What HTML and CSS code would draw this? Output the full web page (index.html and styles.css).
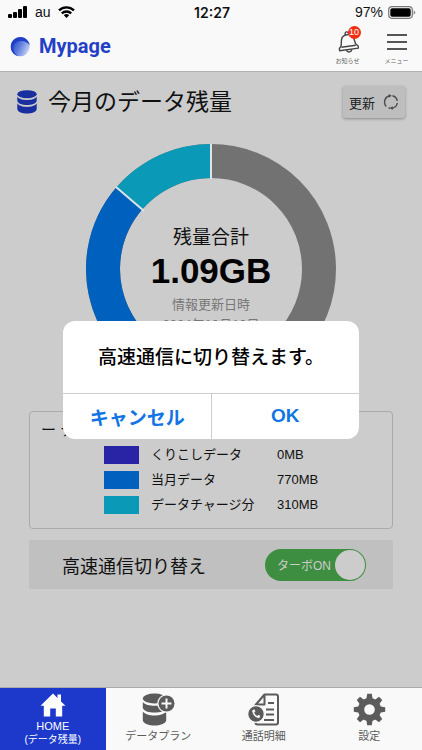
FILE: index.html
```html
<!DOCTYPE html>
<html lang="ja">
<head>
<meta charset="utf-8">
<meta name="viewport" content="width=device-width, initial-scale=1">
<title>Mypage</title>
<link rel="stylesheet" href="styles.css">
</head>
<body>
<header class="top">
  <div class="status">
    <div class="status-left">
      <svg width="20" height="13" viewBox="0 0 20 13" aria-hidden="true"><rect x="0" y="8" width="4" height="4" rx="1"/><rect x="5" y="6" width="4" height="6" rx="1"/><rect x="10" y="3" width="4" height="9" rx="1"/><rect x="15" y="0" width="4" height="12" rx="1"/></svg>
      <span>au</span>
      <svg width="17" height="12" viewBox="0 0 17 12" aria-hidden="true"><g fill="none" stroke="#000" stroke-width="2.3"><path d="M1 4.4a10.8 10.8 0 0 1 15 0"/><path d="M3.8 7.4a6.8 6.8 0 0 1 9.4 0"/></g><path d="M8.500 12l-2.700-2.700a3.900 3.900 0 0 1 5.400 0z"/></svg>
    </div>
    <strong class="clock">12:27</strong>
    <div class="status-right">
      <span>97%</span>
      <svg width="28" height="13" viewBox="0 0 28 13" aria-hidden="true"><rect x=".7" y=".7" width="23.600" height="11.600" rx="3.200" fill="none" stroke="#777" stroke-width="1.200"/><rect x="2.300" y="2.300" width="20.400" height="8.400" rx="1.800"/><path d="M25.700 4.200v4.600q1.600-.8 1.600-2.300t-1.600-2.300z" fill="#888"/></svg>
    </div>
  </div>
  <div class="brandbar">
    <a class="brand" href="#">
      <svg width="21" height="21" viewBox="0 0 21 21" aria-hidden="true"><defs><linearGradient id="globe" x1="0" y1=".3" x2="1" y2=".8"><stop offset="0" stop-color="#2445cc"/><stop offset=".45" stop-color="#5f7ddd"/><stop offset=".8" stop-color="#a9bbee"/><stop offset="1" stop-color="#e9eefb"/></linearGradient></defs><circle cx="10.300" cy="10.700" r="9.500" fill="url(#globe)"/><path d="M20 9.200C18.500 4 15 .9 10.500.9 5 .9.800 5.200.800 10.700c0 4.500 3 8.200 7 9.300C4.500 17.500 3 14.500 3.300 11.500 3.700 7 8 4.500 12.500 5c3 .4 5.500 2 7.500 4.200z" fill="#2040c8"/></svg>
      <span>Mypage</span>
    </a>
    <nav class="tools">
      <a href="#" class="tool">
        <span class="tool-icon"><svg width="22" height="22" viewBox="0 0 22 22" fill="none" stroke="#444" stroke-width="1.400" stroke-linejoin="round" aria-hidden="true"><g transform="rotate(-8 11 11)"><path d="M9.300 3.700V2.500a1.700 1.700 0 0 1 3.400 0v1.200"/><path d="M1.500 18.500v-2.200l2.200-2.500 1-5.300C5.300 5.500 8 3.700 11 3.700s5.700 1.800 6.300 4.800l1 5.300 2.200 2.500v2.200z"/><path d="M3.700 15.300h14.600M8.500 18.700c0 1.500 1 2.300 2.500 2.300s2.500-.8 2.500-2.300"/></g></svg><span class="badge">10</span></span>
        <span>お知らせ</span>
      </a>
      <a href="#" class="tool">
        <span class="tool-icon"><svg width="22" height="18" viewBox="0 0 22 18" fill="none" stroke="#555" stroke-width="2" aria-hidden="true"><path d="M1 2h20M1 9h20M1 16h20"/></svg></span>
        <span>メニュー</span>
      </a>
    </nav>
  </div>
</header>

<main class="screen">
  <div class="heading">
    <svg width="20" height="24" viewBox="0 0 20 24" fill="#192f9f" aria-hidden="true"><ellipse cx="10" cy="4.200" rx="9.700" ry="4"/><path d="M.3 6.500C2 9.300 6 10 10 10s8-.7 9.700-3.500v4.300C19 13.800 14.500 15 10 15S1 13.800.3 10.800zM.3 13.300C2 16 6 16.900 10 16.900s8-.9 9.700-3.600v6c-.7 3-5.200 4.300-9.700 4.300S1 22.300.3 19.300z"/></svg>
    <h1>今月のデータ残量</h1>
    <button class="refresh" type="button">更新
      <svg width="16" height="16" viewBox="0 0 16 16" fill="none" stroke="#4a4a4a" stroke-width="1.400" aria-hidden="true"><path d="M3.300 12.400A6.400 6.400 0 0 1 6.500 1.800M9.500 1.800A6.400 6.400 0 0 1 14.300 7M14.300 9A6.400 6.400 0 0 1 9 14.200M5.500 13.900 7 14.300"/><path d="M5.800 0v3.800L8.800 1.800zM9.700 12.200V16l-3-1.900z" fill="#4a4a4a" stroke="none"/></svg>
    </button>
  </div>

  <div class="gauge">
    <svg class="ring" viewBox="0 0 250 250" fill="none" stroke-width="34" aria-hidden="true">
      <circle cx="125" cy="125" r="108" stroke="#727272"/>
      <circle cx="125" cy="125" r="108" stroke="#0060bd" pathLength="360" stroke-dasharray="122 238" transform="rotate(99 125 125)"/>
      <circle cx="125" cy="125" r="108" stroke="#0a9ab7" pathLength="360" stroke-dasharray="49 311" transform="rotate(221 125 125)"/>
      <path d="M125 0v35M30 43l28 24" stroke="#dde3e6" stroke-width="2"/>
    </svg>
    <div class="gauge-text">
      <span class="total-label">残量合計</span>
      <strong class="total">1.09GB</strong>
      <span class="updated">情報更新日時</span>
      <span class="updated">2024年10月13日</span>
    </div>
  </div>

  <section class="details">
    <h2>ー デ</h2>
    <table>
      <tr><td><span class="swatch carry"></span></td><th scope="row">くりこしデータ</th><td>0MB</td></tr>
      <tr><td><span class="swatch month"></span></td><th scope="row">当月データ</th><td>770MB</td></tr>
      <tr><td><span class="swatch charge"></span></td><th scope="row">データチャージ分</th><td>310MB</td></tr>
    </table>
  </section>

  <label class="turbo">
    <span class="turbo-label">高速通信切り替え</span>
    <span class="switch"><input type="checkbox" role="switch" checked><span class="switch-text">ターボON</span></span>
  </label>

  <div class="overlay">
    <div class="dialog" role="alertdialog" aria-modal="true" aria-labelledby="message">
      <p id="message">高速通信に切り替えます。</p>
      <div class="actions"><button type="button">キャンセル</button><button type="button">OK</button></div>
    </div>
  </div>
</main>

<nav class="tabs">
  <a href="#" class="tab active">
    <svg width="26" height="24" viewBox="0 0 26 24" fill="#fff" aria-hidden="true"><path d="M13 .5 17.500 5V1.500h3.500v7l4.500 4.300h-3.300v10.700h-6.400v-8h-5.600v8H3.800V12.800H.5z"/></svg>
    <span>HOME</span><small>(データ残量)</small>
  </a>
  <a href="#" class="tab">
    <svg width="33" height="33" viewBox="0 0 33 33" fill="#5b5b5b" aria-hidden="true"><ellipse cx="12.500" cy="5.500" rx="11.700" ry="5"/><path d="M.8 9c2.300 3 7 3.700 11.700 3.700S22 12 24.200 9v6c-1 3-6 4.600-11.700 4.600S1.800 18 .8 15z"/><path d="M.8 18.500C3 21.300 7.500 22.500 12.500 22.500s9.500-1.200 11.700-4v9c-1 3.200-6 5-11.700 5S1.800 30.700.8 27.500z"/><circle cx="24.500" cy="10.500" r="9.300" fill="#f9f9f9"/><circle cx="24.500" cy="10.500" r="8"/><path d="M24.500 5.500v10M19.500 10.500h10" stroke="#f9f9f9" stroke-width="2"/></svg>
    <span>データプラン</span>
  </a>
  <a href="#" class="tab">
    <svg width="33" height="33" viewBox="0 0 33 33" fill="none" stroke="#5b5b5b" stroke-width="2" stroke-linejoin="round" aria-hidden="true"><path d="M8.500 12 17.500 1.500H29q2 0 2 2v26q0 2-2 2H10.500q-2 0-2-2zM8.500 11.500h9v-10M21 10h6M19 16.500h8M19 21.500h8M17 27h10"/><circle cx="9" cy="21" r="8.300" fill="#5b5b5b" stroke="#f9f9f9" stroke-width="1.200"/><path d="M6.500 17.500c-.8 3 2 6.500 5 6.500" stroke="#f9f9f9" stroke-width="1.600"/><path d="m6.200 17 1.200 2M10.600 23l2.100 1" stroke="#f9f9f9" stroke-width="2.600"/></svg>
    <span>通話明細</span>
  </a>
  <a href="#" class="tab">
    <svg width="33" height="33" viewBox="-16.500 -16.500 33 33" fill="#5b5b5b" aria-hidden="true"><path d="M-3.200-10-2.300-15.700h4.600L3.200-10v20l-.9 5.700h-4.600L-3.200 10z"/><path d="M-3.200-10-2.300-15.700h4.600L3.200-10v20l-.9 5.700h-4.600L-3.200 10z" transform="rotate(45)"/><path d="M-3.200-10-2.300-15.700h4.600L3.200-10v20l-.9 5.700h-4.600L-3.200 10z" transform="rotate(90)"/><path d="M-3.200-10-2.300-15.700h4.600L3.200-10v20l-.9 5.700h-4.600L-3.200 10z" transform="rotate(135)"/><circle r="11.500"/><circle r="5.300" fill="#f9f9f9"/></svg>
    <span>設定</span>
  </a>
</nav>
</body>
</html>
```
FILE: styles.css
```css
* { box-sizing: border-box; }
body {
  margin: 0;
  min-height: 100vh;
  display: flex;
  flex-direction: column;
  background: #ccc;
  color: #111;
  font-family: "Liberation Sans", "Noto Sans CJK JP", sans-serif;
}
a { color: inherit; text-decoration: none; }
button { font: inherit; border: 0; cursor: pointer; }
svg { display: block; flex: none; }

.top { background: #f9f9f9; border-bottom: 1px solid #b0b0b0; }
.status {
  display: grid;
  grid-template-columns: 1fr auto 1fr;
  align-items: center;
  height: 24px;
  padding: 0 6px 0 8px;
  font-size: 14px;
}
.status-left, .status-right { display: flex; align-items: center; gap: 7px; }
.status-right { justify-content: flex-end; gap: 5px; }
.clock { font: 600 14px Inter, sans-serif; }
.brandbar {
  display: flex;
  justify-content: space-between;
  height: 47px;
  padding: 0 1px 0 10px;
}
.brand {
  display: flex;
  align-items: center;
  gap: 8px;
  padding-bottom: 3px;
  color: #2340c6;
  font: 700 20px Roboto, sans-serif;
}
.tools { display: flex; }
.tool {
  display: flex;
  flex-direction: column;
  align-items: center;
  width: 49px;
  padding-top: 6px;
  color: #666;
  font-size: 6px;
  line-height: 10px;
  white-space: nowrap;
}
.tool-icon { position: relative; display: grid; place-items: center; height: 24px; margin-bottom: 2px; }
.badge {
  position: absolute;
  top: -4px;
  right: -2px;
  width: 13px;
  height: 13px;
  border-radius: 50%;
  background: #f22d11;
  color: #fff;
  font-size: 9px;
  line-height: 13px;
  text-align: center;
}

.screen { position: relative; flex: 1; padding: 14px 29px 16px; }
.heading { display: flex; align-items: center; margin: 0 -12px; height: 32px; }
.heading h1 { flex: 1; margin: 0 0 0 11px; font-size: 23px; line-height: 32px; font-weight: 400; }
.refresh {
  display: flex;
  align-items: center;
  gap: 8px;
  height: 32px;
  padding: 0 6px;
  border-radius: 3px;
  background: #bebebe;
  box-shadow: 0 1px 3px #888;
  color: #222;
  font-size: 13px;
}
.gauge { display: grid; width: 250px; margin: 26px auto 17px; }
.ring { width: 100%; grid-area: 1 / 1; }
.gauge-text {
  grid-area: 1 / 1;
  display: flex;
  flex-direction: column;
  align-items: center;
  padding-top: 80px;
}
.total-label { font-size: 19px; line-height: 28px; }
.total { font-size: 35px; line-height: 38px; color: #000; }
.updated { font-size: 13px; line-height: 20px; color: #777; }
.total + .updated { margin-top: 5px; }

.details { height: 118px; padding: 8px 11px; border: 1px solid #aaa; border-radius: 4px; }
.details h2 { margin: 0 0 2px; font-size: 15px; line-height: 20px; font-weight: 400; }
.details table { margin-left: 63px; border-collapse: collapse; font-size: 13px; }
.details tr { height: 25px; }
.details td, .details th { padding: 0; line-height: 20px; font-weight: 400; text-align: left; }
.details td:first-child { width: 47px; }
.details th { width: 126px; }
.swatch { display: block; width: 35px; height: 18px; }
.carry { background: #2824a5; }
.month { background: #0060bd; }
.charge { background: #0a9ab7; }

.turbo {
  display: flex;
  align-items: center;
  justify-content: space-between;
  height: 49px;
  margin-top: 11px;
  padding: 0 27px 0 33px;
  border-radius: 2px;
  background: #c0c0c0;
}
.turbo-label { font-size: 18px; }
.switch { display: grid; align-items: center; width: 101px; height: 32px; }
.switch input {
  grid-area: 1 / 1;
  appearance: none;
  display: flex;
  justify-content: flex-end;
  width: 101px;
  height: 32px;
  margin: 0;
  padding: 1px;
  border-radius: 16px;
  background: #3e8e41;
}
.switch input::before { content: ""; width: 30px; height: 30px; border-radius: 50%; background: #ccc; }
.switch input:not(:checked) { justify-content: flex-start; }
.switch-text { grid-area: 1 / 1; padding-left: 12px; color: #ccc; font-size: 12px; z-index: 1; }

.overlay { position: absolute; inset: 0; display: grid; place-items: center; }
.dialog { width: 70%; border-radius: 12px; background: #fff; overflow: hidden; }
.dialog p { margin: 0; padding: 23px 10px 21px; font-size: 18px; line-height: 28px; font-weight: 500; text-align: center; color: #000; }
.actions { display: grid; grid-template-columns: 1fr 1fr; border-top: 1px solid #ccc; }
.actions button { height: 45px; background: none; color: #1274e5; font-size: 18px; font-weight: 700; }
.dialog p, .actions button { font-size: 19px; }
.actions button + button { border-left: 1px solid #ccc; }

.tabs { display: grid; grid-template-columns: repeat(4, 1fr); height: 63px; background: #f9f9f9; border-top: 1px solid #aaa; }
.tab { display: flex; flex-direction: column; align-items: center; padding-top: 5px; color: #5b5b5b; font-size: 11px; line-height: 20px; }
.tab.active { background: #1c39cc; color: #fff; line-height: 18px; }
.tab small { font-size: 10px; line-height: 10px; }
```
